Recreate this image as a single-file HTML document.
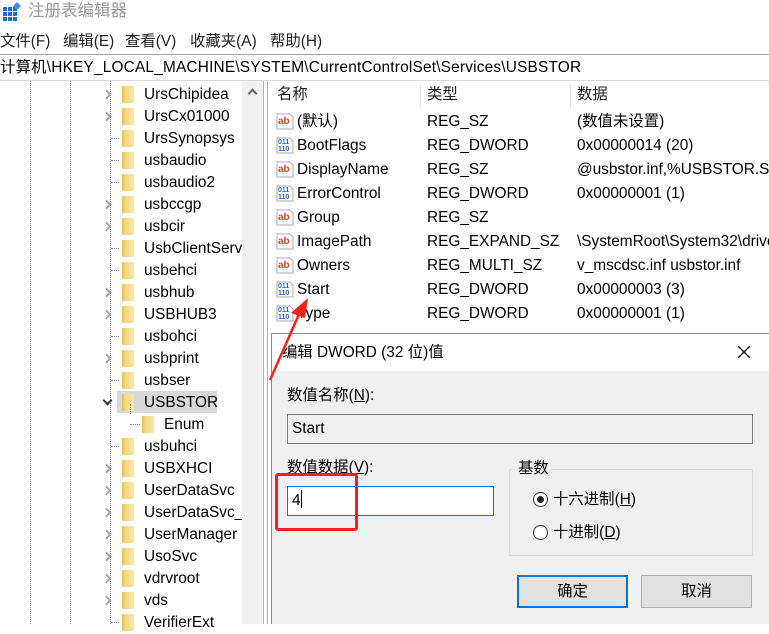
<!DOCTYPE html>
<html><head><meta charset="utf-8"><style>
*{margin:0;padding:0;box-sizing:border-box}
body{width:769px;height:624px;overflow:hidden;background:#fff;font-family:"Liberation Sans","Noto Sans CJK SC",sans-serif;font-size:15.4px;color:#000;position:relative}
.a{position:absolute;white-space:nowrap}
.t{position:absolute;white-space:nowrap;line-height:22px;height:22px}
.fold{position:absolute;width:12px;height:17px;background:linear-gradient(90deg,#e3b94e 0,#f3d77f 3px,#fbe7a8 100%);border-radius:1px}
.chev{position:absolute;width:7px;height:7px;border-right:2px solid #a8a8a8;border-bottom:2px solid #a8a8a8;transform:rotate(-45deg)}
.dotv{position:absolute;width:0;border-left:1px dotted #888}
.doth{position:absolute;height:0;width:8px;border-top:1px dotted #888}
.row{position:absolute;height:24px;line-height:24px;white-space:nowrap}
.m{position:absolute;top:31px;line-height:22px;color:#222}
</style></head><body>
<!-- title -->
<svg class="a" style="left:2px;top:2px" width="20" height="20" viewBox="0 0 20 20"><g fill="#1f6fc5"><rect x="1" y="5" width="4" height="4"/><rect x="6" y="5" width="4" height="4"/><rect x="11" y="5" width="4" height="4"/><rect x="1" y="10" width="4" height="4"/><rect x="6" y="10" width="4" height="4"/><rect x="11" y="10" width="4" height="4"/><rect x="1" y="15" width="4" height="4"/><rect x="6" y="15" width="4" height="4"/><rect x="11" y="15" width="4" height="4"/></g><path d="M15 0l4 4-4 4-4-4z" fill="#3d8ee0"/></svg>
<div class="a" style="left:28px;top:0px;font-size:16.5px;color:#999;line-height:22px">注册表编辑器</div>
<!-- menu -->
<div class="m" style="left:0">文件(F)</div>
<div class="m" style="left:63px">编辑(E)</div>
<div class="m" style="left:125px">查看(V)</div>
<div class="m" style="left:190px">收藏夹(A)</div>
<div class="m" style="left:270px">帮助(H)</div>
<div class="a" style="left:0;top:54px;width:769px;height:1px;background:#a0a0a0"></div>
<div class="a" style="left:0;top:56px;line-height:24px;letter-spacing:0.2px">计算机\HKEY_LOCAL_MACHINE\SYSTEM\CurrentControlSet\Services\USBSTOR</div>
<div class="a" style="left:0;top:80px;width:769px;height:1px;background:#d9d9d9"></div>
<!-- tree -->
<div class="dotv" style="left:30px;top:81px;height:543px"></div>
<div class="dotv" style="left:70px;top:81px;height:543px"></div>
<div class="dotv" style="left:110px;top:81px;height:543px"></div>
<div class="a" style="left:117px;top:391px;width:100px;height:22px;background:#d9d9d9"></div>
<div id="tree"></div>
<!-- scrollbar -->
<div class="a" style="left:242px;top:81px;width:21px;height:543px;background:#f0f0f0"></div>
<div class="chev" style="left:249px;top:90px;transform:rotate(-135deg);border-color:#606060"></div>
<div class="a" style="left:263px;top:81px;width:1px;height:543px;background:#b0b0b0"></div>
<div class="a" style="left:267px;top:81px;width:1px;height:543px;background:#b0b0b0"></div>
<!-- list -->
<div class="a" style="left:277px;top:84px;line-height:22px;color:#222">名称</div>
<div class="a" style="left:420px;top:84px;width:1px;height:24px;background:#e5e5e5"></div>
<div class="a" style="left:427px;top:84px;line-height:22px;color:#222">类型</div>
<div class="a" style="left:570px;top:84px;width:1px;height:24px;background:#e5e5e5"></div>
<div class="a" style="left:577px;top:84px;line-height:22px;color:#222">数据</div>
<div id="list"></div>
<!-- dialog -->
<div class="a" style="left:271px;top:333px;width:498px;height:291px;background:#f0f0f0;border:1px solid #8a8a8a;border-bottom:none;border-right:none">
 <div class="a" style="left:0;top:0;width:497px;height:37px;background:#fff"></div>
 <div class="a" style="left:10px;top:8px;line-height:22px">编辑 DWORD (32 位)值</div>
 <svg class="a" style="left:465px;top:11px" width="14" height="14"><path d="M1 1L13 13M13 1L1 13" stroke="#111" stroke-width="1.3"/></svg>
 <div class="a" style="left:15px;top:51px;line-height:22px">数值名称(<u>N</u>):</div>
 <div class="a" style="left:15px;top:80px;width:466px;height:30px;border:1px solid #7a7a7a;background:#f0f0f0;padding-left:4px;line-height:28px">Start</div>
 <div class="a" style="left:15px;top:123px;line-height:22px">数值数据(<u>V</u>):</div>
 <div class="a" style="left:15px;top:152px;width:207px;height:30px;border:1px solid #0078d7;background:#fff;padding-left:4px;line-height:28px">4<span style="display:inline-block;width:1px;height:18px;background:#000;vertical-align:-3px"></span></div>
 <div class="a" style="left:237px;top:135px;width:244px;height:87px;border:1px solid #dcdcdc"></div>
 <div class="a" style="left:244px;top:124px;line-height:22px;background:#f0f0f0;padding:0 2px">基数</div>
 <div class="a" style="left:261px;top:158px;width:15px;height:15px;border:1px solid #333;border-radius:50%;background:#fff"><div class="a" style="left:3px;top:3px;width:7px;height:7px;border-radius:50%;background:#222"></div></div>
 <div class="a" style="left:281px;top:155px;line-height:22px">十六进制(<u>H</u>)</div>
 <div class="a" style="left:261px;top:191px;width:15px;height:15px;border:1px solid #333;border-radius:50%;background:#fff"></div>
 <div class="a" style="left:281px;top:188px;line-height:22px">十进制(<u>D</u>)</div>
 <div class="a" style="left:245px;top:241px;width:111px;height:33px;border:2px solid #0078d7;background:#e1e1e1;text-align:center;line-height:29px">确定</div>
 <div class="a" style="left:369px;top:241px;width:111px;height:33px;border:1px solid #adadad;background:#e1e1e1;text-align:center;line-height:31px">取消</div>
</div>
<!-- red annotations -->
<div class="a" style="left:275px;top:473px;width:83px;height:58px;border:3px solid #f0231c;border-radius:3px"></div>
<svg class="a" style="left:0;top:0" width="769" height="624"><path d="M270 380L300 312" stroke="#f0231c" stroke-width="2.5"/><path d="M308 298L291 313L305 318Z" fill="#f0231c"/></svg>
<script>
var items=[["UrsChipidea",1],["UrsCx01000",1],["UrsSynopsys",0],["usbaudio",0],["usbaudio2",0],["usbccgp",1],["usbcir",1],["UsbClientServ",0],["usbehci",0],["usbhub",1],["USBHUB3",1],["usbohci",0],["usbprint",1],["usbser",0],["USBSTOR",2],["Enum",3],["usbuhci",0],["USBXHCI",1],["UserDataSvc",1],["UserDataSvc_",1],["UserManager",1],["UsoSvc",1],["vdrvroot",1],["vds",1],["VerifierExt",0]];
var h="";items.forEach(function(it,i){var y=84+i*22;var n=it[0],k=it[1];
if(k==3){h+='<div class="dotv" style="left:130px;top:'+(y-10)+'px;height:10px"></div><div class="doth" style="left:130px;top:'+(y+10)+'px;width:10px"></div><div class="fold" style="left:142px;top:'+(y+2)+'px"></div><div class="t" style="left:164px;top:'+y+'px">'+n+'</div>';return;}
if(k==1)h+='<div class="chev" style="left:103px;top:'+(y+7)+'px"></div>';
else if(k==2)h+='<div class="chev" style="left:104px;top:'+(y+5)+'px;transform:rotate(45deg);border-color:#333"></div>';
else h+='<div class="doth" style="left:111px;top:'+(y+10)+'px"></div>';
h+='<div class="fold" style="left:122px;top:'+(y+2)+'px"></div><div class="t" style="left:144px;top:'+y+'px;width:98px;overflow:hidden">'+n+'</div>';});
document.getElementById("tree").innerHTML=h;
var ab='<svg width="18" height="18" viewBox="0 0 18 18"><path d="M1 2h13l3 3v12H1z" fill="#fff" stroke="#aaa"/><text x="2" y="12" font-size="10" font-weight="bold" fill="#d9452b" font-family="Liberation Sans">ab</text></svg>';
var bn='<svg width="18" height="18" viewBox="0 0 18 18"><path d="M1 2h13l3 3v12H1z" fill="#fff" stroke="#aaa"/><text x="2" y="8" font-size="7" font-weight="bold" fill="#2a5bd0" font-family="Liberation Sans">011</text><text x="2" y="15" font-size="7" font-weight="bold" fill="#2a5bd0" font-family="Liberation Sans">110</text></svg>';
var rows=[["(默认)","REG_SZ","(数值未设置)",0],["BootFlags","REG_DWORD","0x00000014 (20)",1],["DisplayName","REG_SZ","@usbstor.inf,%USBSTOR.SYS",0],["ErrorControl","REG_DWORD","0x00000001 (1)",1],["Group","REG_SZ","",0],["ImagePath","REG_EXPAND_SZ","\\SystemRoot\\System32\\drivers",0],["Owners","REG_MULTI_SZ","v_mscdsc.inf usbstor.inf",0],["Start","REG_DWORD","0x00000003 (3)",1],["Type","REG_DWORD","0x00000001 (1)",1]];
var g="";rows.forEach(function(r,i){var y=110+i*24;
g+='<div class="a" style="left:276px;top:'+(y+2)+'px">'+(r[3]?bn:ab)+'</div><div class="row" style="left:297px;top:'+y+'px">'+r[0]+'</div><div class="row" style="left:427px;top:'+y+'px">'+r[1]+'</div><div class="row" style="left:577px;top:'+y+'px;width:192px;overflow:hidden">'+r[2]+'</div>';});
document.getElementById("list").innerHTML=g;
</script>
</body></html>
